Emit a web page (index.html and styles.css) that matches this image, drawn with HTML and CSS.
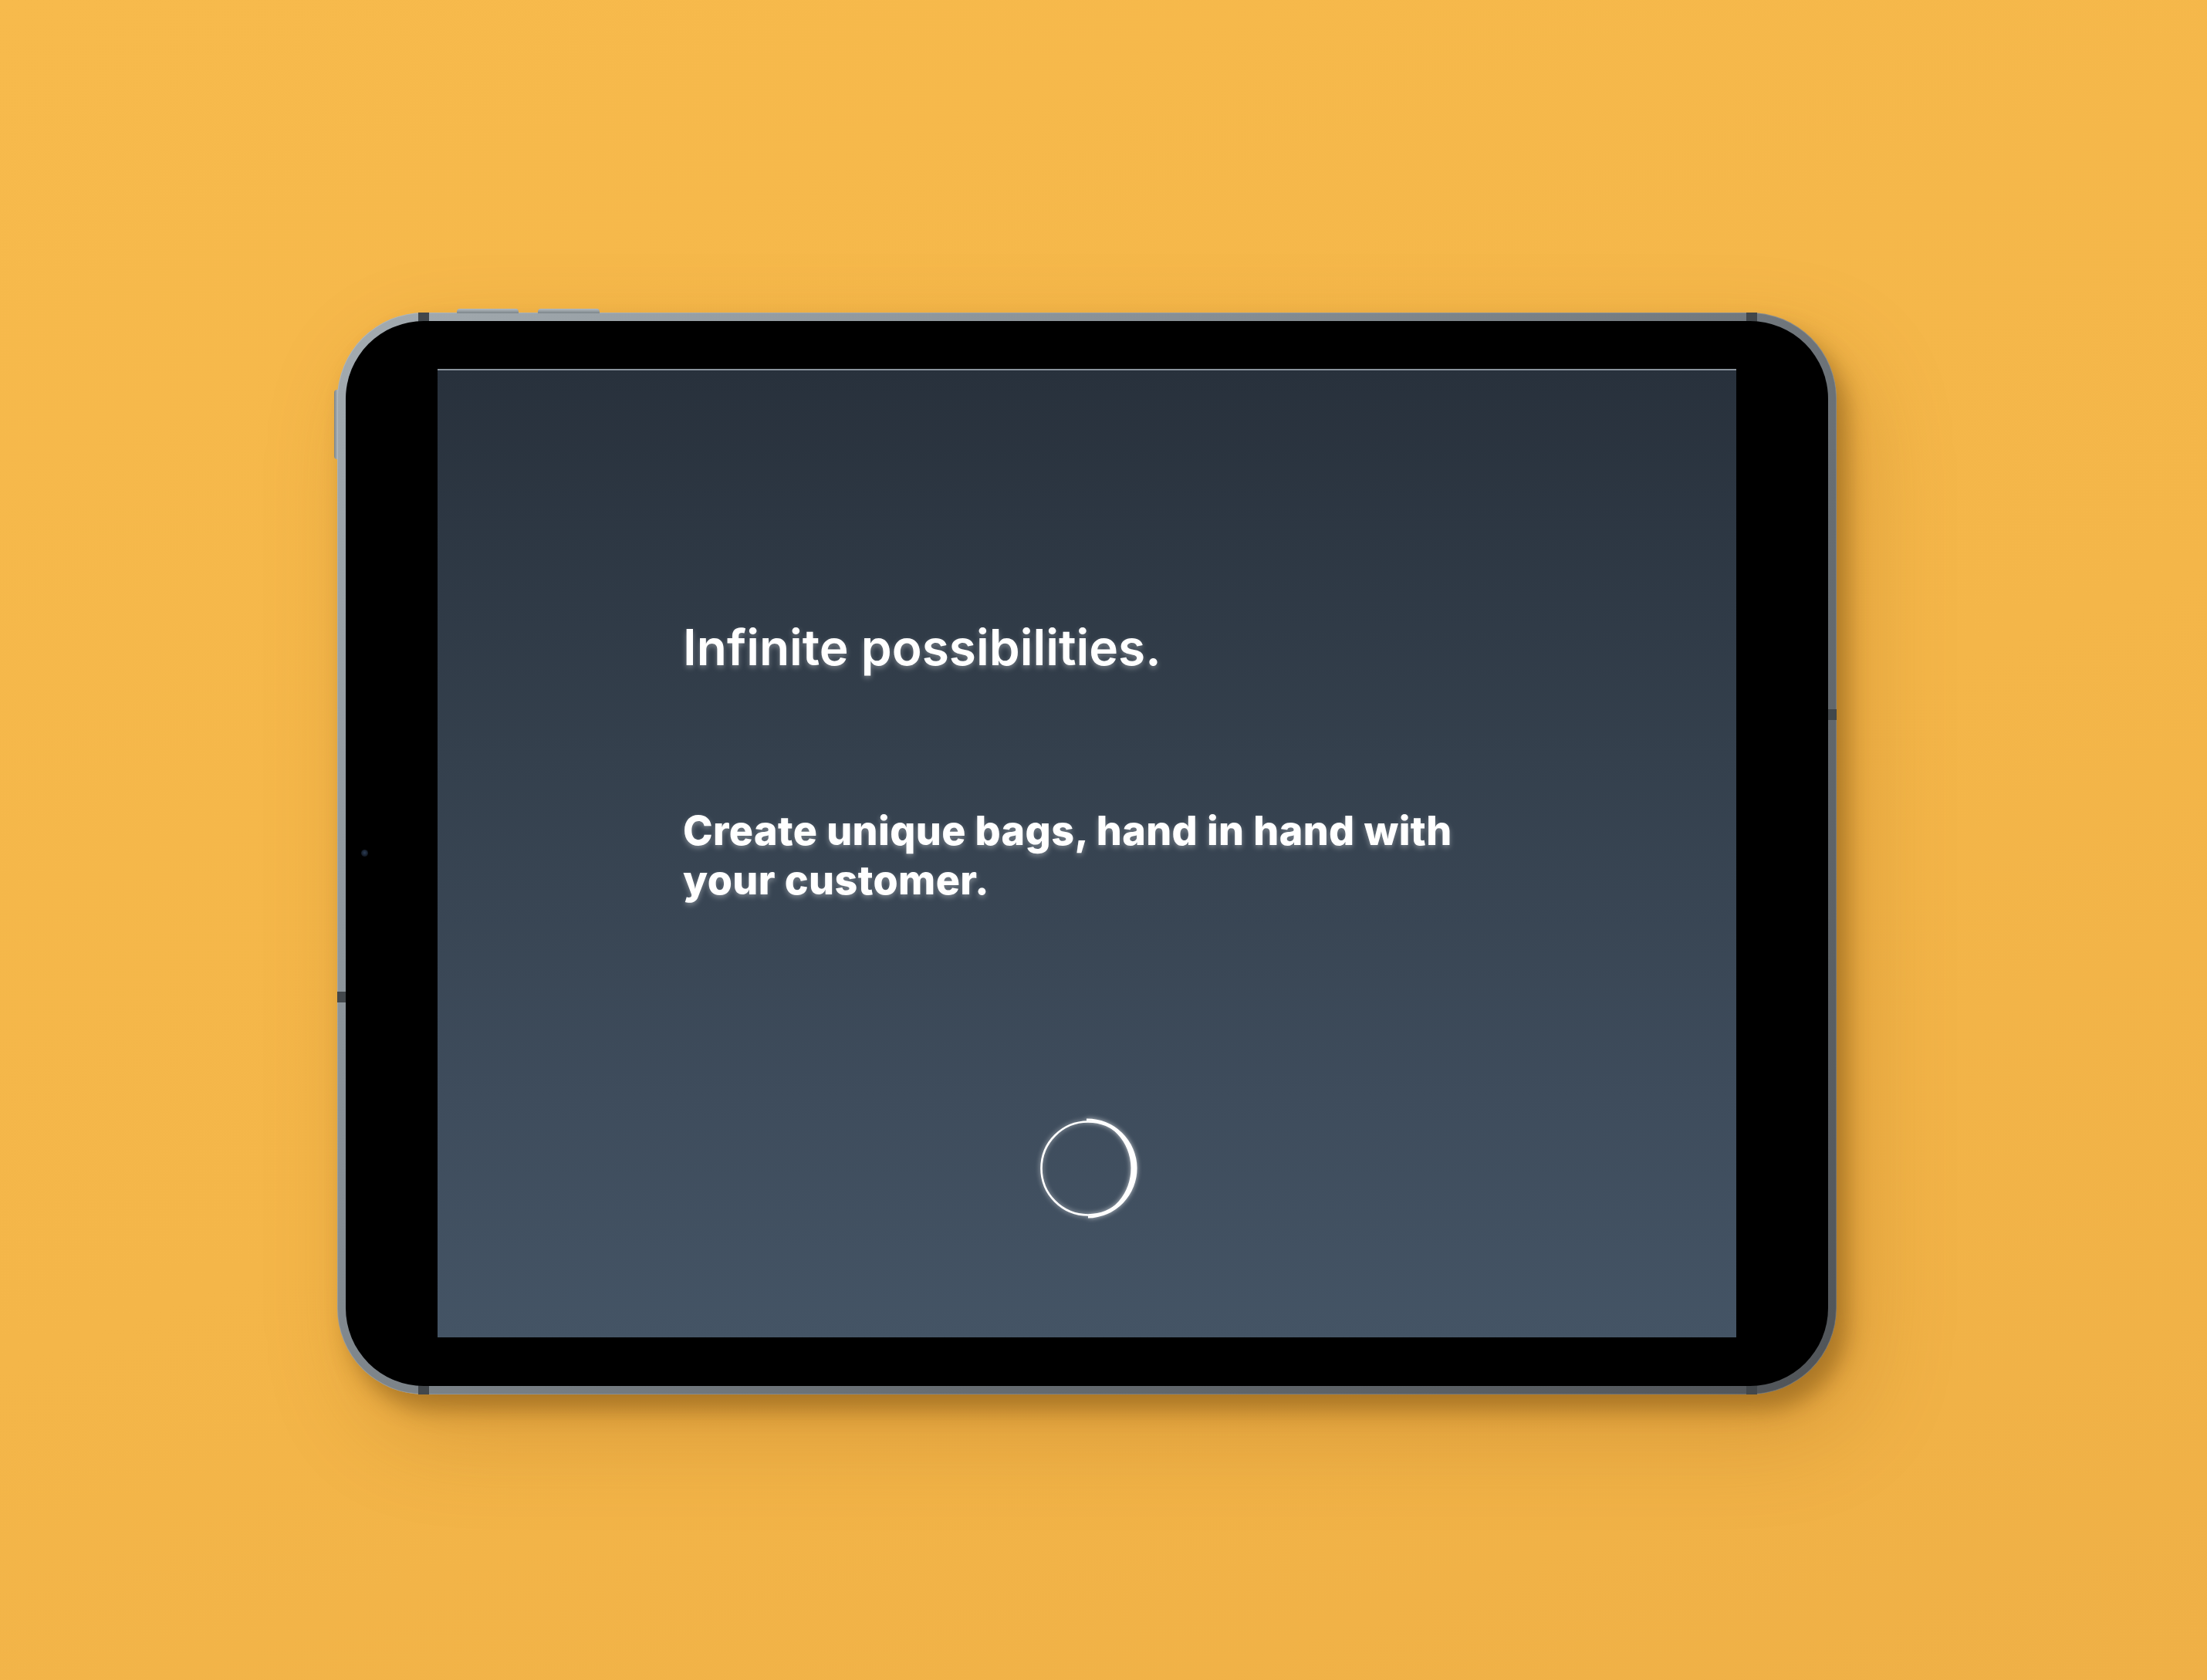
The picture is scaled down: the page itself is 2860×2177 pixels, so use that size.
FILE: index.html
```html
<!DOCTYPE html>
<html lang="en">
<head>
  <meta charset="UTF-8">
  <meta name="viewport" content="width=device-width, initial-scale=1.0">
  <title>Infinite possibilities</title>
  <link rel="stylesheet" href="styles.css">
</head>
<body>
  <div class="scene">
    <div class="ipad">
      <!-- botões e juntas da moldura -->
      <span class="btn-top btn-top-a"></span>
      <span class="btn-top btn-top-b"></span>
      <span class="btn-side"></span>
      <span class="seam seam-top seam-l"></span>
      <span class="seam seam-top seam-r"></span>
      <span class="seam seam-bottom seam-l"></span>
      <span class="seam seam-bottom seam-r"></span>
      <span class="seam seam-left"></span>
      <span class="seam seam-right"></span>

      <div class="bezel">
        <span class="camera"></span>
        <div class="screen">
          <h1 class="title">Infinite possibilities.</h1>
          <p class="lead">Create unique bags, hand in hand with<br>your customer.</p>
          <svg class="spinner" width="132" height="132" viewBox="0 0 132 132">
            <circle cx="66" cy="66" r="60.5" fill="none" stroke="#fff" stroke-width="2.6"/>
            <path d="M64 1.5 A64.5 64.5 0 0 1 66 130.5 L66 127.5 A56.5 61.5 0 0 0 64 4.5 Z" fill="#fff"/>
          </svg>
        </div>
      </div>
    </div>
  </div>
</body>
</html>
```

FILE: styles.css
```css
* {
  margin: 0;
  padding: 0;
  box-sizing: border-box;
}

body {
  font-family: Inter, Lato, sans-serif;
  min-height: 100vh;
  background: linear-gradient(160deg, #f7ba4c 0%, #f4b649 55%, #efb046 100%);
}

.scene {
  padding: 405px 0 0 437px;
  height: 2177px;
}

.ipad {
  position: relative;
  width: 1943px;
  height: 1402px;
  padding: 11px;
  border-radius: 112px;
  background: linear-gradient(135deg, #a3abb0 0%, #858d93 35%, #676d72 65%, #505458 100%);
  box-shadow:
    inset 0 0 0 1px rgba(255, 255, 255, 0.15),
    14px 20px 28px rgba(110, 70, 10, 0.45),
    30px 50px 120px rgba(150, 90, 20, 0.28);
}

.bezel {
  position: relative;
  height: 100%;
  background-color: #000;
  border-radius: 101px;
  padding: 62px 119px 63px;
}

.camera {
  position: absolute;
  left: 20px;
  top: 685px;
  width: 9px;
  height: 9px;
  border-radius: 50%;
  background: radial-gradient(circle at 50% 45%, #2c3d55 0%, #111822 70%);
}

.screen {
  height: 100%;
  display: flex;
  flex-direction: column;
  padding-left: 318px;
  border-top: 2px solid #88919a;
  background: linear-gradient(180deg, #28313c 0%, #34404d 40%, #3e4c5c 75%, #445465 100%);
  color: #fff;
}

.title {
  margin-top: 321px;
  font-size: 64px;
  font-weight: 600;
  line-height: 1.2;
  letter-spacing: 0;
  text-shadow: 0 3px 7px rgba(255, 255, 255, 0.35);
}

.lead {
  margin-top: 167px;
  font-size: 52px;
  font-weight: 800;
  line-height: 64px;
  letter-spacing: 0.4px;
  white-space: nowrap;
  text-shadow: 0 3px 7px rgba(255, 255, 255, 0.35);
}

.spinner {
  align-self: flex-start;
  margin-top: 275px;
  margin-left: 459px;
  filter: drop-shadow(0 0 3px rgba(255, 255, 255, 0.7));
}

/* detalhes da moldura */
.btn-top {
  position: absolute;
  top: -5px;
  width: 80px;
  height: 6px;
  border-radius: 4px 4px 0 0;
  background: linear-gradient(180deg, #b4bcc1, #7b8489);
}

.btn-top-a {
  left: 155px;
}

.btn-top-b {
  left: 260px;
}

.btn-side {
  position: absolute;
  left: -4px;
  top: 100px;
  width: 5px;
  height: 90px;
  border-radius: 4px 0 0 4px;
  background: linear-gradient(90deg, #7b8489, #b4bcc1);
}

.seam {
  position: absolute;
  background-color: #42474b;
}

.seam-top,
.seam-bottom {
  width: 14px;
  height: 12px;
}

.seam-top {
  top: 0;
}

.seam-bottom {
  bottom: 0;
}

.seam-l {
  left: 105px;
}

.seam-r {
  left: 1826px;
}

.seam-left,
.seam-right {
  width: 12px;
  height: 14px;
}

.seam-left {
  left: 0;
  top: 880px;
}

.seam-right {
  right: 0;
  top: 514px;
}
```
